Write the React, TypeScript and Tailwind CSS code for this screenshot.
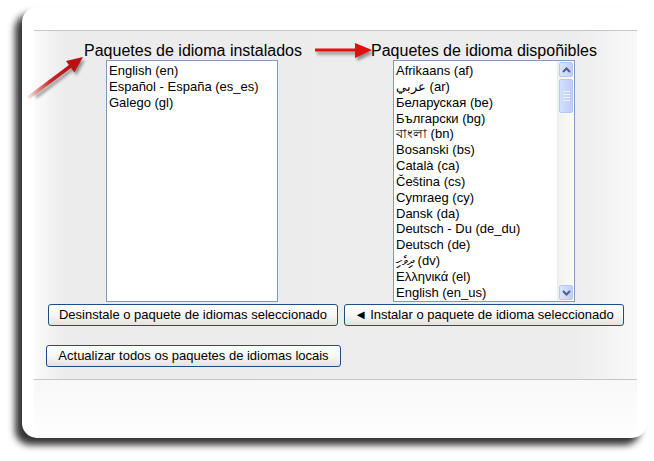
import React from 'react';

const installed = ['English (en)', 'Español - España (es_es)', 'Galego (gl)'];

const available = [
    'Afrikaans (af)',
    'عربي (ar)',
    'Беларуская (be)',
    'Български (bg)',
    'বাংলা (bn)',
    'Bosanski (bs)',
    'Català (ca)',
    'Čeština (cs)',
    'Cymraeg (cy)',
    'Dansk (da)',
    'Deutsch - Du (de_du)',
    'Deutsch (de)',
    'ދިވެހި (dv)',
    'Ελληνικά (el)',
    'English (en_us)',
];

function ScrollButton({ up }: { up?: boolean }) {
    return (
        <div className="h-[15px] mx-[1px] rounded-[2px] border border-[#b4c8f6] bg-gradient-to-r from-[#dbe6fd] to-[#bcd0fa] flex items-center justify-center">
            <svg width="9" height="6" viewBox="0 0 9 6">
                <path d={up ? 'M1 5 L4.5 1.5 L8 5' : 'M1 1 L4.5 4.5 L8 1'} fill="none" stroke="#4d6185" strokeWidth="2" />
            </svg>
        </div>
    );
}

function Scrollbar() {
    return (
        <div className="w-[17px] py-[1px] flex flex-col bg-gradient-to-r from-[#f1f1ec] to-[#fcfcfa] border-l border-[#eeede5]">
            <ScrollButton up />
            <div className="mt-[2px] h-[34px] mx-[1px] rounded-[2px] border border-[#b4c8f6] bg-gradient-to-r from-[#d3e0fd] to-[#b9cdf9] flex flex-col items-center justify-center gap-[2px]">
                <div className="w-[7px] h-[1px] bg-[#eef3fe]" />
                <div className="w-[7px] h-[1px] bg-[#eef3fe]" />
                <div className="w-[7px] h-[1px] bg-[#eef3fe]" />
                <div className="w-[7px] h-[1px] bg-[#eef3fe]" />
            </div>
            <div className="flex-1" />
            <ScrollButton />
        </div>
    );
}

function XpButton({ children, className }: { children: React.ReactNode; className: string }) {
    return (
        <button className={`h-[22px] rounded-[3px] border border-[#1d4f87] bg-gradient-to-b from-white via-[#f7f7f4] to-[#e4e3dd] text-[13px] leading-[20px] text-black ${className}`}>
            {children}
        </button>
    );
}

export default function App() {
    return (
        <div className="relative w-[654px] h-[461px] bg-white overflow-hidden pl-[22px] pt-[7px] font-['Liberation_Sans',Arial,sans-serif]">
            <div className="w-[625px] h-[431px] rounded-[15px] bg-white shadow-[-7px_7px_7px_rgba(0,0,0,0.8)] pt-[23px] flex flex-col">
                <div className="ml-[12px] w-[603px] h-[350px] border-t border-b border-[#c6c6c6] bg-[linear-gradient(to_right,#fbfbfb_0%,#ececec_5%,#ededed_90%,#f9f9f9_100%)] pl-[12px] pt-[11px]">
                    <div className="grid grid-cols-[294px_284px] gap-x-[2px]">
                        <div className="flex flex-col items-center">
                            <div className="text-[16px] leading-[18px] text-black">Paquetes de idioma instalados</div>
                            <div className="w-[172px] h-[242px] border border-[#7f9db9] bg-white pl-[2px] pt-[2px] -translate-x-[1px]">
                                {installed.map((l) => (
                                    <div key={l} className="text-[13px] leading-[16px] text-black whitespace-nowrap">{l}</div>
                                ))}
                            </div>
                        </div>
                        <div className="flex flex-col items-center">
                            <div className="text-[16px] leading-[18px] text-black">Paquetes de idioma dispoñibles</div>
                            <div className="w-[182px] h-[242px] border border-[#7f9db9] bg-white flex overflow-hidden">
                                <div className="flex-1 pl-[2px] pt-[2px] overflow-hidden">
                                    {available.map((l) => (
                                        <div key={l} className="text-[13px] leading-[15.85px] text-black whitespace-nowrap">{l}</div>
                                    ))}
                                </div>
                                <Scrollbar />
                            </div>
                        </div>
                        <div className="flex justify-center mt-[2px]">
                            <XpButton className="w-[290px]">Desinstale o paquete de idiomas seleccionado</XpButton>
                        </div>
                        <div className="flex justify-center mt-[2px]">
                            <XpButton className="w-[280px]">
                                <span className="text-[13px] mr-[3px]">◄</span>Instalar o paquete de idioma seleccionado
                            </XpButton>
                        </div>
                    </div>
                    <XpButton className="mt-[19px] w-[295px]">Actualizar todos os paquetes de idiomas locais</XpButton>
                </div>
                <div className="ml-[12px] w-[603px] flex-1 rounded-b-[15px] bg-gradient-to-b from-[#f8f8f8] to-[#fefefe]" />
            </div>

            <svg className="absolute left-0 top-0 pointer-events-none" width="654" height="461" viewBox="0 0 654 461">
                <defs>
                    <linearGradient id="tail" x1="28" y1="98" x2="72" y2="65" gradientUnits="userSpaceOnUse">
                        <stop offset="0" stopColor="#cc1a1a" stopOpacity="0.1" />
                        <stop offset="0.5" stopColor="#c41414" stopOpacity="0.9" />
                        <stop offset="1" stopColor="#b81010" />
                    </linearGradient>
                    <filter id="blur" x="-20%" y="-20%" width="140%" height="140%">
                        <feGaussianBlur stdDeviation="1.5" />
                    </filter>
                </defs>
                <g filter="url(#blur)" opacity="0.55" transform="translate(2 3)">
                    <line x1="34" y1="94" x2="72" y2="65" stroke="#444" strokeWidth="3" />
                    <polygon points="83,57 74.4,72.2 66,61" fill="#444" />
                    <line x1="315" y1="50" x2="357" y2="50" stroke="#444" strokeWidth="3" />
                    <polygon points="355,43 372,50 355,58" fill="#444" />
                </g>
                <line x1="28" y1="98" x2="72" y2="65" stroke="url(#tail)" strokeWidth="3.5" />
                <polygon points="83,57 74.4,72.2 66,61" fill="#b81212" />
                <line x1="315" y1="50" x2="357" y2="50" stroke="#e41010" strokeWidth="3" />
                <polygon points="355,43 372,50 355,58" fill="#e01010" />
            </svg>
        </div>
    );
}
